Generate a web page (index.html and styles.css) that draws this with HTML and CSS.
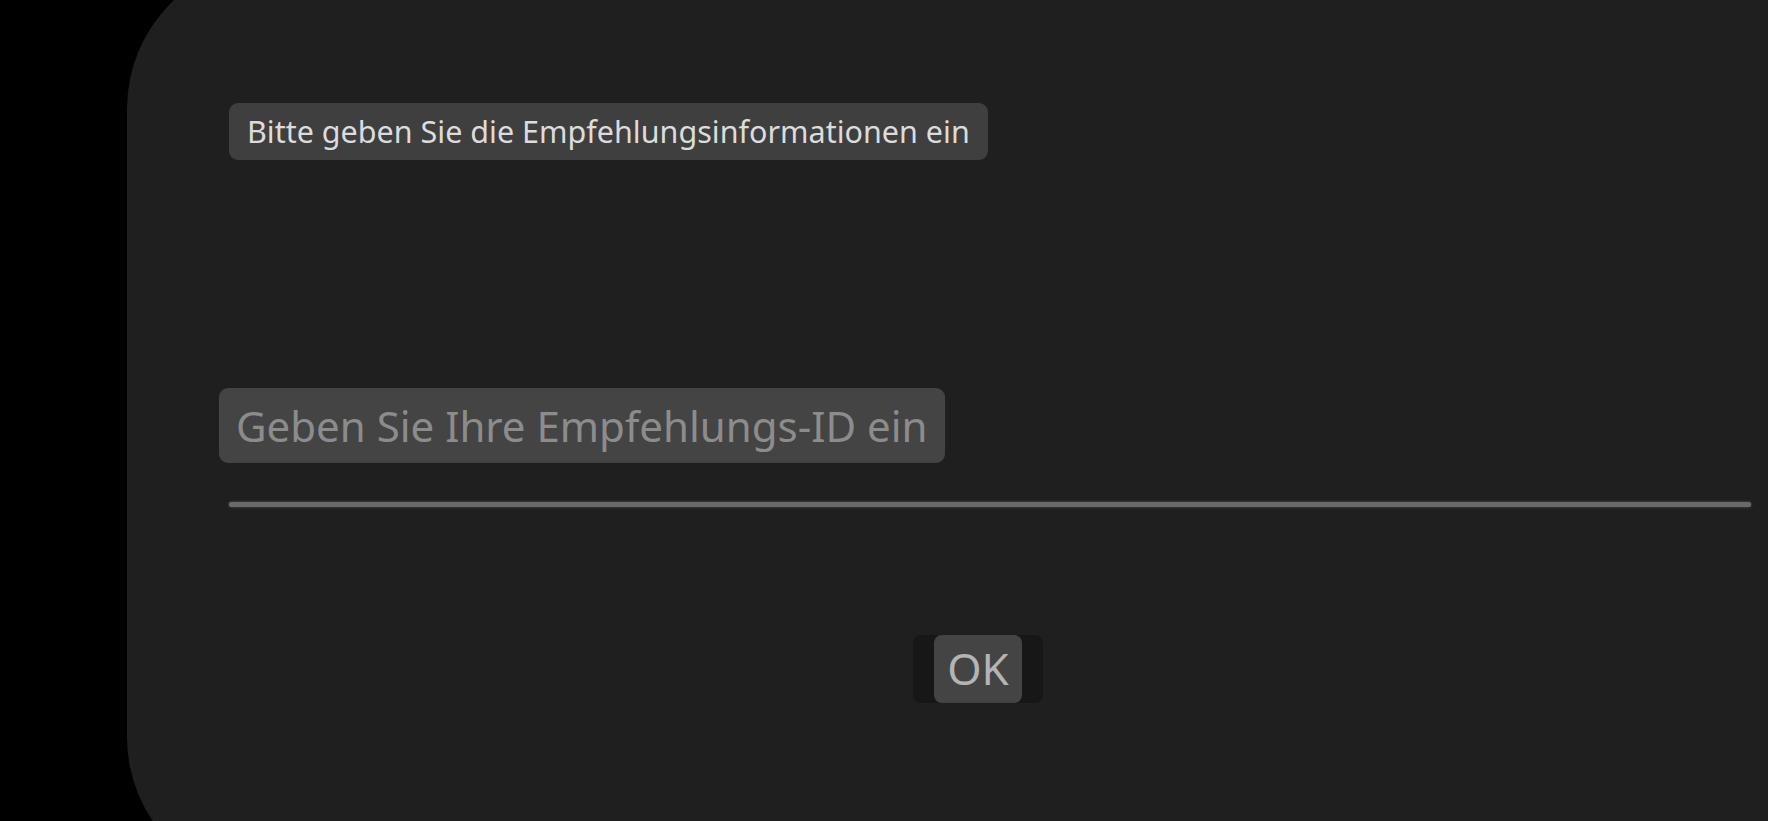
FILE: index.html
```html
<!DOCTYPE html>
<html>

<head>
  <meta charset="utf-8" />
  <meta name="viewport" content="width=device-width,minimum-scale=1.0,maximum-scale=1.0,user-scalable=no" />
  <link rel="stylesheet" href="styles.css">
</head>

<body>
  <div class="dialog">
    <div class="title">Bitte geben Sie die Empfehlungsinformationen ein</div>
    <div class="field">
      <div class="input">Geben Sie Ihre Empfehlungs-ID ein</div>
      <div class="underline"></div>
    </div>
    <div class="actions">
      <div class="ok-wrap">
        <a href="javascript:void(0)" class="ok">OK</a>
      </div>
    </div>
  </div>
</body>

</html>
```

FILE: styles.css
```css
html,
body {
  margin: 0;
  padding: 0;
  height: 100%;
  overflow: hidden;
  background-color: #000;
  font-family: "Noto Sans", "Open Sans", sans-serif;
}

.dialog {
  margin: -41px 0 0 127px;
  height: 928px;
  padding: 144px 0 0 92px;
  box-sizing: border-box;
  background-color: #1f1f1f;
  border-radius: 150px 0 0 150px;
  display: flex;
  flex-direction: column;
  align-items: flex-start;
}

.title {
  margin-left: 10px;
  height: 57px;
  line-height: 57px;
  padding: 0 18px;
  font-size: 30.5px;
  color: #dcdcdc;
  background-color: #3f3f3f;
  border-radius: 9px;
  white-space: nowrap;
}

.field {
  margin-top: 228px;
  align-self: stretch;
}

.input {
  display: inline-block;
  height: 75px;
  line-height: 75px;
  padding: 0 17px;
  font-size: 42px;
  color: #8c8c8c;
  background-color: #444;
  border-radius: 9px;
  white-space: nowrap;
}

.underline {
  margin: 39px 17px 0 10px;
  height: 5px;
  background-color: #6a6a6a;
  border-radius: 2px;
  box-shadow: 0 0 3px #555;
}

.actions {
  margin-top: 128px;
  margin-left: 694px;
}

.ok-wrap {
  padding: 0 21px;
  background-color: #171717;
  border-radius: 8px;
}

.ok {
  display: block;
  width: 88px;
  height: 68px;
  line-height: 66px;
  text-align: center;
  font-size: 44px;
  color: #b4b4b4;
  background-color: #444;
  border-radius: 8px;
  text-decoration: none;
}
```
